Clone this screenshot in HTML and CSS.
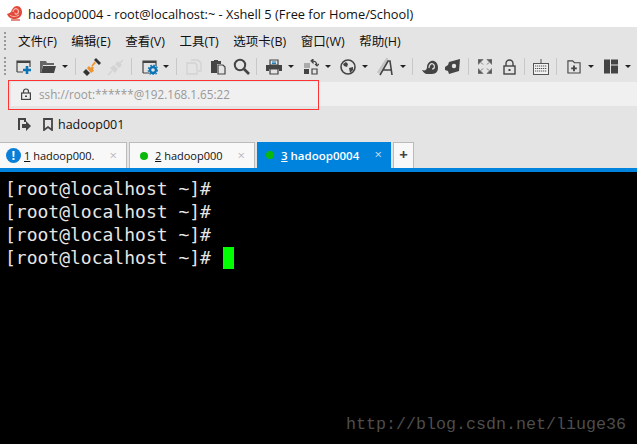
FILE: index.html
```html
<!DOCTYPE html>
<html lang="zh">
<head>
<meta charset="utf-8">
<title>Xshell 5</title>
<link rel="stylesheet" href="styles.css">
</head>
<body>
<div class="app">
  <header class="titlebar">
    <svg class="logo" width="16" height="17" viewBox="0 0 16 17"><path d="M0 9c2-1 3-1 4-2 1-3 3-6 6-6 3 0 5 3 5 6 0 4-3 7-7 7-4 0-7-2-8-5z" fill="#e2493a"/><path d="M6 7c0-2 2-4 4-3 2 1 2 4 0 5-1 .5-2-.3-2-1.300" fill="none" stroke="#f8b9ad" stroke-width="1.300"/><path d="M3 10c2 2 6 2 9 0" fill="none" stroke="#f8b9ad" stroke-width="1"/><path d="M4 15h9" stroke="#d9695c" stroke-width="1.500"/></svg>
    <span class="title-text">hadoop0004 - root@localhost:~ - Xshell 5 (Free for Home/School)</span>
  </header>

  <nav class="menubar">
    <i class="grip grip-menu"></i>
    <span class="menu-item first">文件(F)</span>
    <span class="menu-item">编辑(E)</span>
    <span class="menu-item">查看(V)</span>
    <span class="menu-item">工具(T)</span>
    <span class="menu-item">选项卡(B)</span>
    <span class="menu-item">窗口(W)</span>
    <span class="menu-item">帮助(H)</span>
  </nav>

  <div class="toolbar">
    <i class="grip grip-tool"></i>
    <svg class="ic w16 ml10" viewBox="0 0 16 16"><path d="M1 13V2h13v6M1 13h6" fill="none" stroke="#444" stroke-width="1.2"/><path d="M1 2h13v2H1z" fill="#444"/><path d="M11 7v8M7 11h8" stroke="#0a72b5" stroke-width="2.6"/></svg>
    <svg class="ic w16 ml8" viewBox="0 0 16 16"><path d="M0 2h6l1 2h7v2H3L1 14H0z" fill="#666"/><path d="M3 7h13l-2 7H1z" fill="#444"/></svg>
    <i class="caret ml6"></i>
    <i class="sep ml7"></i>
    <svg class="ic w18 ml7" viewBox="0 0 18 18"><path d="M0 14l3-3 4 4-3 3z" fill="#333"/><path d="M4 10l2-2 2 2 1-2 2 2-1 1 1 2-3 2z" fill="#ee9330"/><path d="M7 7l4 4" stroke="#ee9330" stroke-width="0"/><path d="M9 6l4-4" stroke="#e4e4e4" stroke-width="0"/><path d="M8.500 7.500l3-4 1.500 1.500-3.500 3.500z" fill="#ee9330"/><path d="M11 2l2-2 5 5-2 2z" fill="#333"/></svg>
    <svg class="ic w18 ml6" viewBox="0 0 18 18"><path d="M1 17l4-4M12 6l4-4" stroke="#d4d4d4" stroke-width="1.600"/><path d="M3 10l4-3 4 4-3 4zM8 6l3-3 4 4-3 3z" fill="#d4d4d4"/></svg>
    <i class="sep ml6"></i>
    <svg class="ic w16 ml10" viewBox="0 0 16 16"><path d="M1 14V2h13v5M1 14h6" fill="none" stroke="#444" stroke-width="1.2"/><path d="M1 2h13v2H1z" fill="#444"/><circle cx="11" cy="11" r="3" fill="none" stroke="#0a72b5" stroke-width="2.4"/><circle cx="11" cy="11" r="4.800" fill="none" stroke="#0a72b5" stroke-width="1.2" stroke-dasharray="1.600 1.600"/></svg>
    <i class="caret ml5"></i>
    <i class="sep ml7"></i>
    <svg class="ic w16 ml9" viewBox="0 0 16 16"><path d="M5 1h7l3 3v8h-3M1 4h8l2 2v9H1z" fill="none" stroke="#d2d2d2" stroke-width="1.3"/></svg>
    <svg class="ic w16 ml8" viewBox="0 0 16 16"><path d="M1 2h3V1h4v1h3v3H7v9H1z" fill="#444"/><path d="M8 6h5l2 2v7H8z" fill="#e4e4e4" stroke="#444" stroke-width="1.2"/></svg>
    <svg class="ic w18 ml7" viewBox="0 0 18 18"><circle cx="7" cy="7" r="5.200" fill="none" stroke="#444" stroke-width="2"/><path d="M11 11l5 5" stroke="#444" stroke-width="2.600"/></svg>
    <i class="sep ml5"></i>
    <svg class="ic w16 ml9" viewBox="0 0 16 16"><path d="M4 1h8v5H4z" fill="none" stroke="#444" stroke-width="1.2"/><path d="M6 3h4M6 4.600h4" stroke="#0a72b5"/><path d="M0 6h16v6h-3v-2H3v2H0z" fill="#444"/><path d="M4 10h8v5H4z" fill="none" stroke="#444" stroke-width="1.2"/></svg>
    <i class="caret ml6"></i>
    <svg class="ic w16 ml9" viewBox="0 0 16 16"><path d="M1 4h6v5H1z" fill="#aaa"/><path d="M1 10h5v5H1z" fill="#444"/><path d="M9 10h5v5H9z" fill="none" stroke="#444" stroke-width="1.2"/><path d="M9 2c3 0 5 1 5 5M12 5l2 2 2-2M8 2l2-2v4z" fill="none" stroke="#444" stroke-width="1.100"/></svg>
    <i class="caret ml6"></i>
    <svg class="ic w16 ml9" viewBox="0 0 16 16"><circle cx="8" cy="8" r="7" fill="none" stroke="#444" stroke-width="1.600"/><path d="M3 5l3-2 2 2-1 3-3-1zM9 9l4-1 0 3-3 3z" fill="#444"/></svg>
    <i class="caret ml6"></i>
    <svg class="ic w20 ml9" viewBox="0 0 20 18"><path d="M1 15L10 1h1" fill="none" stroke="#c4c4c4" stroke-width="2.400"/><path d="M3 17L11 3h2l2 14M6 12h8" fill="none" stroke="#444" stroke-width="1.600"/></svg>
    <i class="caret ml3"></i>
    <i class="sep ml6"></i>
    <svg class="ic w18 ml8" viewBox="0 0 18 18"><path d="M1 12c3 1 5 0 5-3 0-4 4-7 7-6 3 1 4 4 4 7 0 3-2 6-6 6H6C4 16 2 14 1 12z" fill="#444"/><path d="M8 10c0-3 2-5 4-4s2 5-1 5" fill="none" stroke="#e4e4e4" stroke-width="1.200"/></svg>
    <svg class="ic w16 ml6" viewBox="0 0 16 16"><path d="M0 8l3-2 1-3 11-3-1 12-10 3-1-3-3-1z" fill="#444"/><circle cx="9" cy="7" r="2.200" fill="#e4e4e4"/></svg>
    <i class="sep ml7"></i>
    <svg class="ic w14 ml9" viewBox="0 0 14 14"><path d="M0 5V0h5zM9 0h5v5zM0 9v5h5zM14 9v5H9zM3 3l2 2M11 3L9 5M3 11l2-2M11 11L9 9" fill="#555" stroke="#777"/></svg>
    <svg class="ic w13 ml11" viewBox="0 0 13 16"><path d="M3 7V4.500a3.500 3.500 0 017 0V7" fill="none" stroke="#444" stroke-width="1.400"/><rect x="1" y="7" width="11" height="8" fill="none" stroke="#444" stroke-width="1.400"/><path d="M5.500 10h2v2h-2z" fill="#444"/></svg>
    <i class="sep ml8"></i>
    <svg class="ic w16 ml8" viewBox="0 0 16 16"><path d="M8 0v4" stroke="#555"/><rect x=".5" y="4.500" width="15" height="11" fill="#f2f2f2" stroke="#555"/><path d="M2 7h12M2 9.500h12M2 12h12" stroke="#555" stroke-dasharray="1.300 .7"/></svg>
    <i class="sep ml7"></i>
    <svg class="ic w14 ml10" viewBox="0 0 15 16"><path d="M1 2h5l2 2h6v11H1z" fill="none" stroke="#444" stroke-width="1.200"/><path d="M7.500 7v6M4.500 10h6" stroke="#444" stroke-width="2"/></svg>
    <i class="caret ml7"></i>
    <svg class="ic w14 ml10" viewBox="0 0 14 14"><path d="M0 0h6v14H0zM7 0h7v5H7zM7 6h7v8H7z" fill="#444"/></svg>
    <i class="caret ml7"></i>
  </div>

  <div class="addressbar">
    <svg class="addr-lock" width="10" height="12" viewBox="0 0 10 12"><path d="M2.500 5V3.500a2.500 2.500 0 015 0V5" fill="none" stroke="#444" stroke-width="1.200"/><rect x=".6" y="5" width="8.800" height="6.400" fill="none" stroke="#444" stroke-width="1.200"/><path d="M4 7.500h2v1.500H4z" fill="#444"/></svg>
    <span class="addr-text">ssh://root:******@192.168.1.65:22</span>
  </div>

  <div class="linkbar">
    <svg class="link-arrow" width="14" height="14" viewBox="0 0 14 14"><path d="M1 1h8v4H7V3H3v10H1z" fill="#444"/><path d="M5 7h4V4l5 5-5 5v-3H5z" fill="#444"/></svg>
    <svg class="link-mark" width="10" height="13" viewBox="0 0 10 13"><path d="M1 1h8v11L5 9l-4 3z" fill="none" stroke="#444" stroke-width="1.800"/></svg>
    <span class="link-text">hadoop001</span>
  </div>

  <div class="tabs">
    <div class="tab t1">
      <svg class="tab-alert" width="15" height="15" viewBox="0 0 15 15"><circle cx="7.500" cy="7.500" r="7.500" fill="#0a7fd8"/><path d="M6.400 3h2.200l-.3 6H6.700zM6.500 10h2v2h-2z" fill="#fff"/></svg>
      <span class="tab-label"><u>1</u> hadoop000.</span>
      <span class="tab-x">×</span>
    </div>
    <div class="tab t2">
      <i class="dot"></i>
      <span class="tab-label"><u>2</u> hadoop000</span>
      <span class="tab-x">×</span>
    </div>
    <div class="tab t3">
      <i class="dot"></i>
      <span class="tab-label active"><u>3</u> hadoop0004</span>
      <span class="tab-x light">×</span>
    </div>
    <div class="tab-add">+</div>
  </div>

  <main class="terminal">
    <div class="line">[root@localhost ~]#</div>
    <div class="line">[root@localhost ~]#</div>
    <div class="line">[root@localhost ~]#</div>
    <div class="line">[root@localhost ~]# <i class="cursor"></i></div>
  </main>

  <div class="red-box"></div>
  <div class="watermark">http://blog.csdn.net/liuge36</div>
</div>
</body>
</html>
```
FILE: styles.css
```css
* { box-sizing: border-box; }
html, body { margin: 0; padding: 0; background: #000; }
i { display: block; font-style: normal; }
.app {
  position: relative; width: 637px; height: 444px; overflow: hidden;
  display: flex; flex-direction: column; background: #e4e4e4;
  font-family: "Open Sans", "Noto Sans CJK SC", sans-serif; color: #111;
}
.titlebar { height: 27px; background: #fff; display: flex; align-items: center; padding-left: 7px; flex: none; }
.logo { flex: none; }
.title-text { margin-left: 5px; font-size: 12.82px; color: #111; white-space: nowrap; }

.menubar { height: 26px; display: flex; align-items: center; gap: 14.5px; padding-left: 4px; flex: none; font-size: 12.5px; }
.grip { width: 2px; background: repeating-linear-gradient(#999 0 2px, transparent 2px 4px); flex: none; }
.grip-menu { height: 20px; margin-top: 3px; margin-right: -2.500px; }
.menu-item { white-space: nowrap; }

.toolbar { height: 27px; display: flex; align-items: center; padding-left: 4px; flex: none; }
.grip-tool { height: 20px; }
.ic { display: block; flex: none; }
.w13 { width: 13px; height: 16px; }
.w14 { width: 14px; height: 15px; }
.w16 { width: 16px; height: 16px; }
.w18 { width: 18px; height: 18px; }
.w20 { width: 20px; height: 18px; }
.ml3 { margin-left: 3px; }
.ml5 { margin-left: 5px; }
.ml6 { margin-left: 6px; }
.ml7 { margin-left: 7px; }
.ml8 { margin-left: 8px; }
.ml9 { margin-left: 9px; }
.ml10 { margin-left: 10px; }
.ml11 { margin-left: 11px; }
.caret { width: 6px; height: 3px; border: 3px solid transparent; border-top: 3px solid #222; border-bottom: 0; flex: none; }
.sep { width: 1px; height: 17px; background: #c8c8c8; flex: none; }

.addressbar { height: 24px; margin: 2px 0 0 11px; background: #f0f0f0; display: flex; align-items: center; padding-left: 10px; flex: none; }
.addr-lock { flex: none; }
.addr-text { margin-left: 8px; color: #999; font-size: 11.7px; white-space: nowrap; }

.linkbar { height: 36px; display: flex; align-items: center; padding-left: 17px; flex: none; }
.link-arrow { flex: none; }
.link-mark { margin-left: 12px; flex: none; }
.link-text { margin-left: 5px; font-size: 12.5px; color: #111; }

.tabs { height: 26px; display: flex; flex: none; gap: 2px; font-size: 11px; }
.tab { height: 26px; background: #f8f8f8; border-top: 1px solid #bbb; border-right: 1px solid #bbb; display: flex; align-items: center; position: relative; flex: none; }
.t1 { width: 127px; padding-left: 6px; }
.t2 { width: 126px; padding-left: 10px; border-left: 1px solid #bbb; }
.t3 { width: 134px; padding-left: 9px; background: #0083dc; border: 0; color: #fff; }
.tab-alert { flex: none; margin-right: 3px; }
.dot { width: 8px; height: 8px; border-radius: 50%; background: #0ab80a; margin-right: 7px; flex: none; }
.tab-label { white-space: nowrap; }
.tab-label.active { font-weight: 600; font-size: 11.5px; }
.tab-x { position: absolute; right: 9px; top: 4px; color: #bbb; font-size: 13px; line-height: 16px; }
.tab-x.light { color: #cde; }
.tab-add { width: 21px; height: 26px; background: #f8f8f8; border: 1px solid #bbb; border-bottom: 0; text-align: center; font-weight: 700; font-size: 15px; line-height: 22px; color: #444; flex: none; }

.terminal { flex: 1; border-top: 4px solid #0083dc; background: #000; color: #e6e6e6; padding: 5px 0 0 5px; font-family: "DejaVu Sans Mono", monospace; font-size: 18px; line-height: 23px; }
.line { white-space: pre; height: 23px; }
.cursor { display: inline-block; width: 11px; height: 22px; background: #00ff00; vertical-align: -5px; margin-left: 1px; }

.red-box { position: absolute; left: 8px; top: 80px; width: 311px; height: 30px; border: 1px solid #f33; }
.watermark { position: absolute; left: 346px; top: 415px; font-family: "Liberation Mono", monospace; font-size: 16.67px; line-height: 20px; color: #4d4d4d; white-space: nowrap; }
```
